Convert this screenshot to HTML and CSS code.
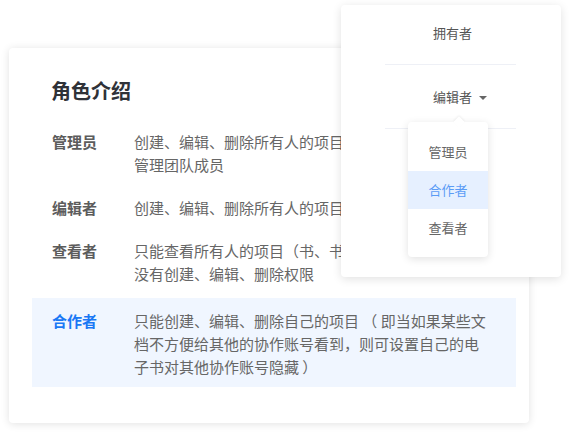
FILE: index.html
```html
<!DOCTYPE html>
<html lang="zh">
<head>
<meta charset="utf-8">
<link rel="stylesheet" href="styles.css">
</head>
<body>
<div class="card">
  <h2 class="title">角色介绍</h2>
  <div class="row">
    <div class="label">管理员</div>
    <div class="desc">创建、编辑、删除所有人的项目（书、书架、团队）管理团队成员</div>
  </div>
  <div class="row">
    <div class="label">编辑者</div>
    <div class="desc">创建、编辑、删除所有人的项目（书、书架）</div>
  </div>
  <div class="row">
    <div class="label">查看者</div>
    <div class="desc">只能查看所有人的项目（书、书架、文档、团队），没有创建、编辑、删除权限</div>
  </div>
  <div class="row active">
    <div class="label">合作者</div>
    <div class="desc">只能创建、编辑、删除自己的项目 （ 即当如果某些文档不方便给其他的协作账号看到，则可设置自己的电子书对其他协作账号隐藏 ）</div>
  </div>
</div>

<div class="popover">
  <div class="opt first">拥有者</div>
  <div class="divider"></div>
  <div class="opt">编辑者<span class="caret"></span></div>
  <div class="divider"></div>
  <div class="menu">
    <div class="menu-item">管理员</div>
    <div class="menu-item selected">合作者</div>
    <div class="menu-item">查看者</div>
  </div>
</div>
</body>
</html>
```

FILE: styles.css
```css
html, body {
  margin: 0;
  padding: 0;
  background: #ffffff;
}

body {
  font-family: "Noto Sans CJK SC", "Noto Sans", sans-serif;
  width: 570px;
  height: 436px;
  position: relative;
  overflow: hidden;
  text-spacing-trim: space-all;
}

.card {
  box-sizing: border-box;
  margin: 48px 0 0 9px;
  width: 520px;
  height: 375px;
  padding: 29px 13px 0 23px;
  background: #fff;
  border-radius: 4px;
  box-shadow: 0 1px 8px rgba(0, 0, 0, 0.12);
}

.title {
  margin: 0 0 14.5px 19px;
  font-size: 20px;
  line-height: 28px;
  font-weight: 700;
  color: #2f3238;
}

.row {
  display: flex;
  padding: 10px 26px 10px 20px;
  font-size: 15px;
  line-height: 23px;
}

.label {
  flex: none;
  width: 82px;
  font-weight: 700;
  color: #5c5c5c;
}

.desc {
  flex: 1;
  color: #666;
}

.row.active {
  margin-top: 3px;
  padding-top: 11px;
  padding-bottom: 9px;
  background: #f0f6ff;
}

.row.active .label {
  color: #1a78f5;
}

.popover {
  position: absolute;
  left: 341px;
  top: 5px;
  width: 220px;
  height: 272px;
  box-sizing: border-box;
  padding: 0 45px 0 44px;
  background: #fff;
  border-radius: 4px;
  box-shadow: 0 2px 10px rgba(0, 0, 0, 0.12);
}

.opt {
  padding: 22px 0 21px 4px;
  font-size: 13px;
  line-height: 20px;
  color: #555;
  text-align: center;
  position: relative;
}

.opt.first {
  padding-top: 18px;
}

.caret {
  position: absolute;
  left: 94px;
  top: 31px;
  width: 0;
  height: 0;
  border-left: 4px solid transparent;
  border-right: 4px solid transparent;
  border-top: 4px solid #666;
}

.divider {
  height: 1px;
  background: #eef0f6;
}

.menu {
  position: absolute;
  left: 67px;
  top: 117px;
  width: 80px;
  box-sizing: border-box;
  padding: 11px 0 10px;
  background: #fff;
  border-radius: 4px;
  box-shadow: 0 2px 8px rgba(0, 0, 0, 0.12);
}

.menu::before {
  content: "";
  position: absolute;
  left: 47px;
  top: -4px;
  width: 8px;
  height: 8px;
  background: #fff;
  transform: rotate(45deg);
  box-shadow: -1px -1px 2px rgba(0, 0, 0, 0.06);
}

.menu-item {
  position: relative;
  height: 38px;
  line-height: 38px;
  font-size: 13px;
  color: #666;
  text-align: center;
}

.menu-item.selected {
  background: #e6f0ff;
  color: #5b9cf6;
}
```
